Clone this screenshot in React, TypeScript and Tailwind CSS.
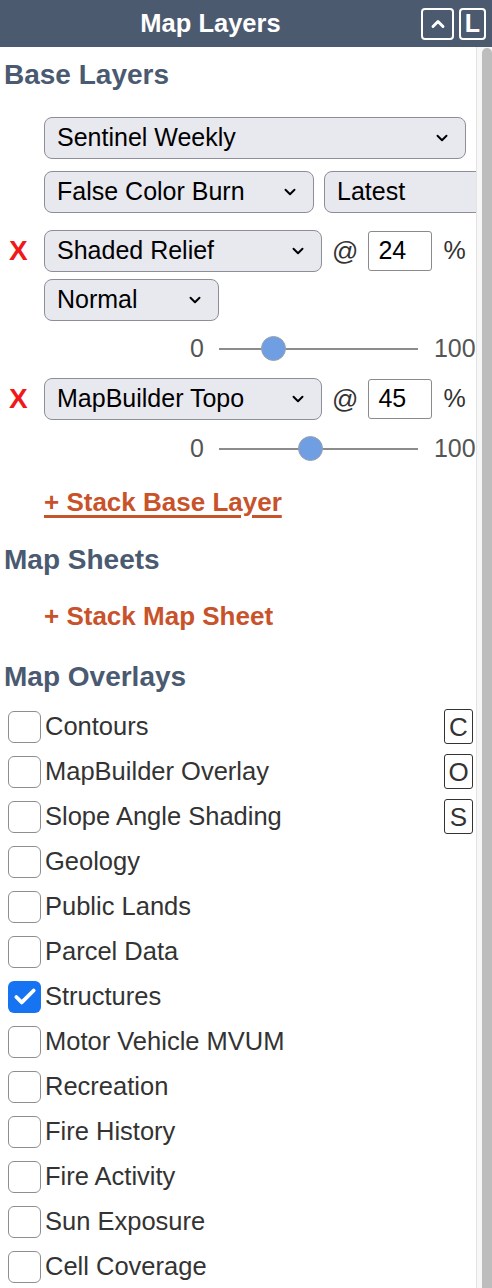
import { ChevronDown, ChevronUp, Check } from "lucide-react";

const overlays = [
	{ label: "Contours", key: "C" },
	{ label: "MapBuilder Overlay", key: "O" },
	{ label: "Slope Angle Shading", key: "S" },
	{ label: "Geology" },
	{ label: "Public Lands" },
	{ label: "Parcel Data" },
	{ label: "Structures", checked: true },
	{ label: "Motor Vehicle MVUM" },
	{ label: "Recreation" },
	{ label: "Fire History" },
	{ label: "Fire Activity" },
	{ label: "Sun Exposure" },
	{ label: "Cell Coverage" },
];

function Select(props: { label: string; className?: string; arrow?: boolean }) {
	const { label, className = "", arrow = true } = props;
	return (
		<div
			className={`flex h-[42px] shrink-0 items-center justify-between rounded-[8px] border-[1.5px] border-[#8e8e9a] bg-[#e8e8ef] pr-[14px] pl-[12px] text-[25px] text-black ${className}`}
		>
			<span className="whitespace-nowrap">{label}</span>
			{arrow && <ChevronDown size={18} strokeWidth={2.6} className="shrink-0" />}
		</div>
	);
}

function Slider(props: { value: number }) {
	return (
		<div className="flex h-[30px] items-center pl-[190px] text-[25px] text-[#555]">
			<span>0</span>
			<div className="relative mr-[16px] ml-[15px] h-[2px] w-[199px] shrink-0 bg-[#8c8c8c]">
				<div
					className="absolute top-[-12px] h-[25px] w-[25px] rounded-full border-[1.5px] border-[#9aa3ad] bg-[#6f9ee2]"
					style={{ left: `${(props.value / 100) * 175}px` }}
				/>
			</div>
			<span>100</span>
		</div>
	);
}

function OpacityRow(props: { layer: string; value: number }) {
	return (
		<div className="flex h-[42px] items-center">
			<span className="w-[44px] pl-[9px] text-[28px] font-bold text-[#f01818]">X</span>
			<Select label={props.layer} className="w-[278px]" />
			<span className="ml-[10px] text-[26px] text-[#333]">@</span>
			<div className="ml-[10px] flex h-[40px] w-[64px] items-center rounded-[3px] border-[1.5px] border-[#8a8a8a] bg-white px-[9px] text-[25px] text-black">
				{props.value}
			</div>
			<span className="ml-[11px] text-[25px] text-[#333]">%</span>
		</div>
	);
}

function Heading(props: { children: string; className?: string }) {
	return (
		<h2 className={`pl-[4px] text-[28px] leading-[34px] font-bold text-[#4a5a71] ${props.className ?? ""}`}>
			{props.children}
		</h2>
	);
}

export default function App() {
	return (
		<div className="flex h-[1288px] w-[492px] flex-col overflow-hidden bg-white font-['Liberation_Sans',Arial,sans-serif]">
			<header className="flex h-[47px] shrink-0 items-center bg-[#4b5a6f] pr-[6px]">
				<h1 className="flex-1 text-center text-[25.5px] font-bold text-white">Map Layers</h1>
				<div className="flex h-[32px] w-[33px] items-center justify-center rounded-[4px] border-2 border-white text-white">
					<ChevronUp size={20} strokeWidth={3.5} />
				</div>
				<div className="ml-[5px] flex h-[32px] w-[27px] items-center justify-center rounded-[4px] border-2 border-white text-[25px] font-bold text-white">
					L
				</div>
			</header>

			<div className="flex min-h-0 flex-1">
				<main className="w-[476px] shrink-0 overflow-hidden">
					<Heading className="mt-[11px]">Base Layers</Heading>

					<div className="mt-[25px] pl-[44px]">
						<Select label="Sentinel Weekly" className="w-[422px]" />
						<div className="mt-[12px] flex gap-[10px]">
							<Select label="False Color Burn" className="w-[270px]" />
							<Select label="Latest" className="w-[170px]" arrow={false} />
						</div>
					</div>

					<div className="mt-[17px]">
						<OpacityRow layer="Shaded Relief" value={24} />
						<div className="mt-[7px] pl-[44px]">
							<Select label="Normal" className="h-[40px] w-[175px]" />
						</div>
						<div className="mt-[13px]">
							<Slider value={24} />
						</div>
					</div>

					<div className="mt-[14px]">
						<OpacityRow layer="MapBuilder Topo" value={45} />
						<div className="mt-[14px]">
							<Slider value={45} />
						</div>
					</div>

					<div className="mt-[19px] pl-[44px]">
						<span className="text-[26px] font-bold text-[#c8532b] underline decoration-[2.5px] underline-offset-[4px]">
							+ Stack Base Layer
						</span>
					</div>

					<Heading className="mt-[21px]">Map Sheets</Heading>
					<div className="mt-[20px] pl-[44px] text-[26px] font-bold text-[#c8532b]">+ Stack Map Sheet</div>

					<Heading className="mt-[24px]">Map Overlays</Heading>

					<ul className="mt-[10px]">
						{overlays.map((item) => (
							<li key={item.label} className="flex h-[45px] items-center pr-[3px] pl-[8px]">
								{item.checked ? (
									<div className="flex h-[32px] w-[33px] items-center justify-center rounded-[6px] bg-[#1673f2] text-white">
										<Check size={26} strokeWidth={3.5} />
									</div>
								) : (
									<div className="h-[32px] w-[33px] rounded-[6px] border-[1.5px] border-[#8e8e8e] bg-white" />
								)}
								<span className="ml-[4px] flex-1 text-[25.5px] text-[#333]">{item.label}</span>
								{item.key && (
									<span className="flex h-[35px] min-w-[29px] items-center justify-center rounded-[3px] border-[1.5px] border-[#333] px-[2px] text-[26px] leading-none text-[#333]">
										{item.key}
									</span>
								)}
							</li>
						))}
					</ul>
				</main>

				<div className="flex w-[16px] shrink-0 border-l border-[#e3e3e3] bg-[#f7f7f7] pt-[1px] pl-[5px]">
					<div className="w-[10px] flex-1 rounded-t-[5px] bg-[#bdbdbd]" />
				</div>
			</div>
		</div>
	);
}
